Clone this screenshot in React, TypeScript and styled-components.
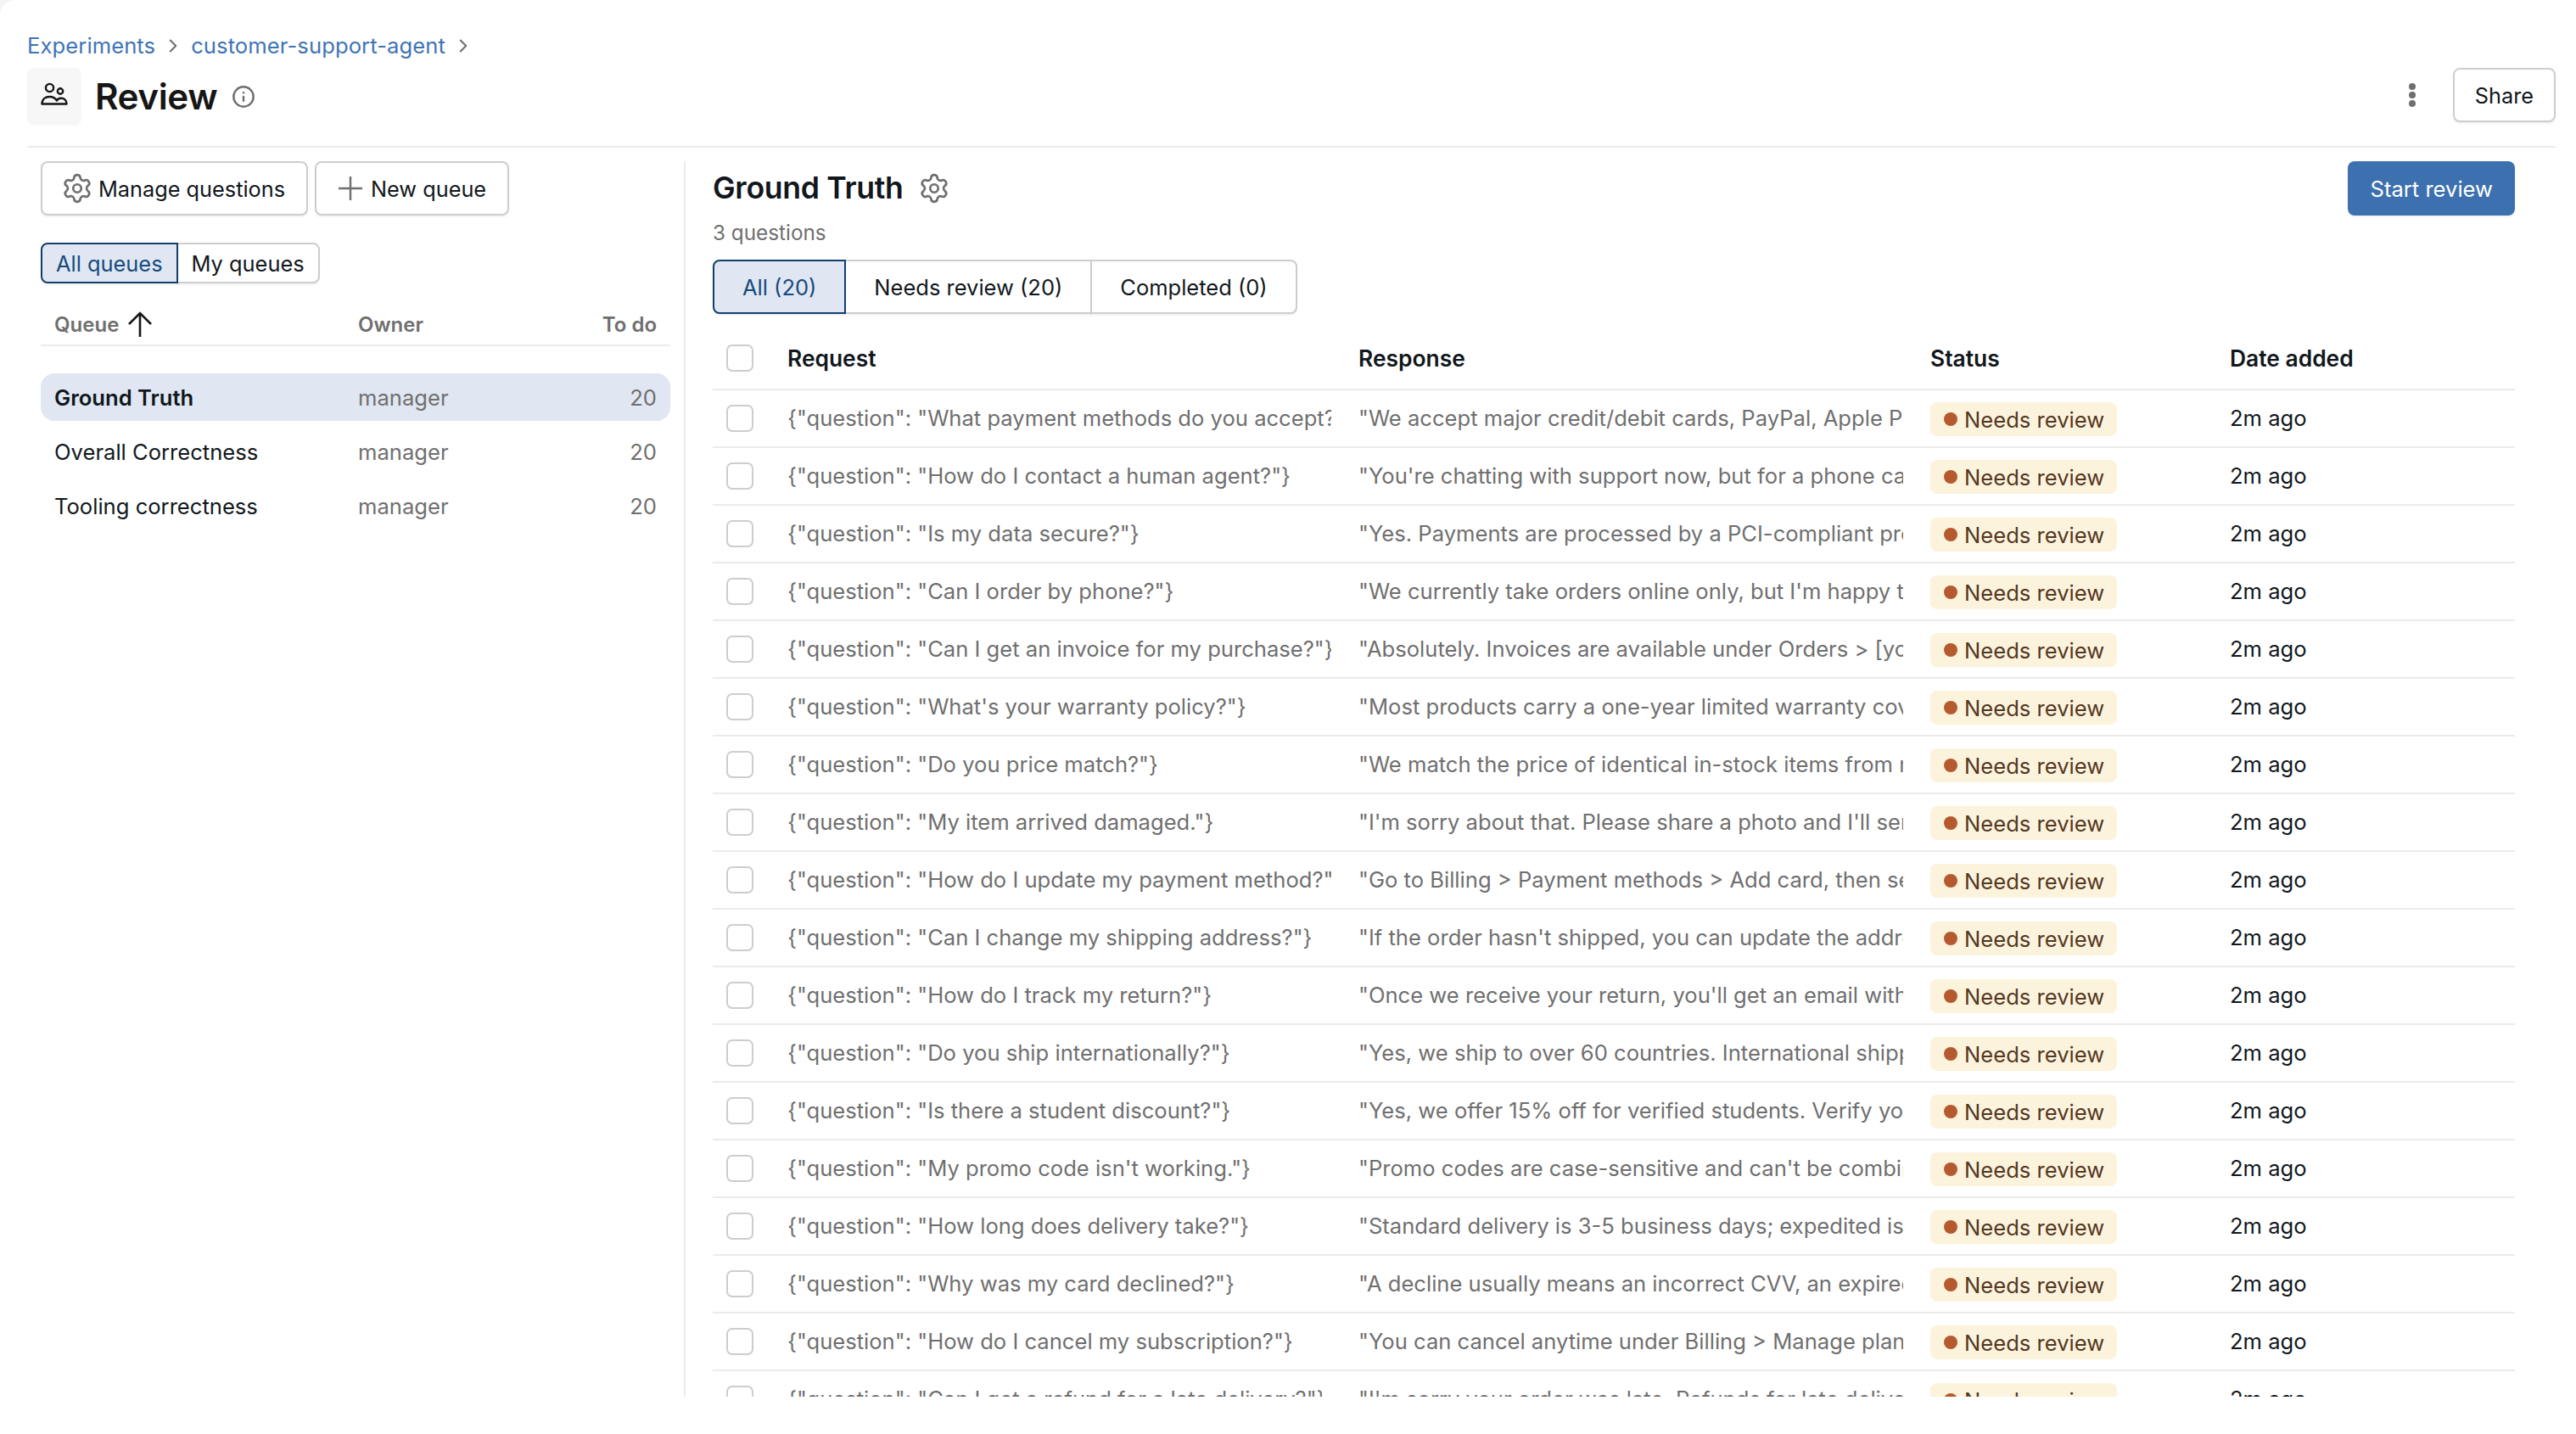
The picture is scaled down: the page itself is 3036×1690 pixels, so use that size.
import React from 'react';
import styled, { createGlobalStyle } from 'styled-components';
import { ChevronRight, Info, Settings } from 'lucide-react';

const GlobalStyle = createGlobalStyle`
  * {
    box-sizing: border-box;
  }
  html,
  body {
    margin: 0;
    background: #f4f5f7;
    font-family: Inter, 'Liberation Sans', sans-serif;
    font-size: 25.6px;
    color: #11171c;
  }
`;

const Shell = styled.div`
  height: 1690px;
  padding: 34px 24px 0 32px;
  background: #fff;
  border-top-left-radius: 18px;
  overflow: hidden;
`;

const Breadcrumb = styled.nav`
  display: flex;
  align-items: center;
  gap: 8px;
  height: 40px;
  color: #6f6f6f;
`;

const Crumb = styled.a`
  color: #3f74b5;
  line-height: 40px;
  letter-spacing: 0.08px;
`;

const TitleRow = styled.header`
  display: flex;
  align-items: flex-start;
  justify-content: space-between;
  margin-top: 6px;
  padding-bottom: 24px;
  border-bottom: 2px solid #ebebeb;
`;

const TitleLeft = styled.div`
  display: flex;
  align-items: center;
  height: 68px;
`;

const IconTile = styled.div`
  display: flex;
  align-items: center;
  justify-content: center;
  width: 64px;
  height: 68px;
  margin-right: 16px;
  border-radius: 8px;
  background: #f7f7f7;
  padding-bottom: 4px;
`;

const PageTitle = styled.h1`
  margin: 0 17px 0 0;
  font-size: 42.2px;
  font-weight: 600;
  line-height: 68px;
  letter-spacing: -0.4px;
  color: #161616;
`;

const InfoIcon = styled(Info)`
  color: #6f6f6f;
  margin-top: -1px;
`;

const TitleActions = styled.div`
  display: flex;
  align-items: center;
  gap: 40px;
`;

const Button = styled.button<{ $primary?: boolean }>`
  display: inline-flex;
  align-items: center;
  justify-content: center;
  gap: 9px;
  height: 64px;
  padding: 0 ${(p) => (p.$primary ? '26px' : '24px')};
  border: ${(p) => (p.$primary ? 'none' : '2px solid #cdcdcd')};
  border-radius: 8px;
  background: ${(p) => (p.$primary ? '#3c70ae' : '#fff')};
  color: ${(p) => (p.$primary ? '#fff' : '#11171c')};
  box-shadow: 0 2px 2px rgba(0, 0, 0, 0.05);
  font-family: inherit;
  font-size: ${(p) => (p.$primary ? '25.6px' : '25.3px')};
  white-space: nowrap;
`;

const ToolbarButton = styled(Button)`
  padding: 0 25px;
`;

const Body = styled.main`
  display: flex;
  height: 1456px;
  margin-top: 16px;
  overflow: hidden;
`;

const QueuePanel = styled.aside`
  flex: 0 0 776px;
  padding: 0 16px;
  border-right: 2px solid #ebebeb;
`;

const ButtonRow = styled.div`
  display: flex;
  gap: 8px;
`;

const Segments = styled.div`
  display: inline-flex;
  margin-top: 32px;
  vertical-align: top;
`;

const Segment = styled.button<{ $active?: boolean; $first?: boolean; $last?: boolean }>`
  height: 48px;
  padding: 0 16px;
  margin-left: ${(p) => (p.$first ? 0 : '-2px')};
  border: 2px solid ${(p) => (p.$active ? '#123f6e' : '#cdcdcd')};
  border-radius: ${(p) => (p.$first ? '8px 0 0 8px' : p.$last ? '0 8px 8px 0' : 0)};
  background: ${(p) => (p.$active ? '#e0e7f2' : '#fff')};
  color: ${(p) => (p.$active ? '#164a7e' : '#11171c')};
  box-shadow: 0 2px 2px rgba(0, 0, 0, 0.05);
  font-family: inherit;
  font-size: 25.4px;
  position: relative;
  z-index: ${(p) => (p.$active ? 1 : 0)};
`;

const QueueGrid = styled.div`
  display: grid;
  grid-template-columns: 358px 1fr auto;
  align-items: center;
  padding: 0 16px;
`;

const QueueHead = styled(QueueGrid)`
  height: 50px;
  margin-top: 24px;
  border-bottom: 2px solid #ebebeb;
  color: #6f6f6f;
  font-weight: 600;
  font-size: 24px;
`;

const SortLabel = styled.span`
  display: inline-flex;
  align-items: center;
  gap: 10px;
`;

const QueueList = styled.div`
  display: flex;
  flex-direction: column;
  gap: 8px;
  margin-top: 32px;
`;

const QueueRow = styled(QueueGrid)<{ $selected?: boolean }>`
  height: 56px;
  border-radius: 16px;
  background: ${(p) => (p.$selected ? '#e0e7f2' : 'transparent')};
  font-weight: ${(p) => (p.$selected ? 600 : 400)};
`;

const Muted = styled.span`
  color: #6f6f6f;
  font-weight: 400;
`;

const ReviewPanel = styled.section`
  flex: 1;
  min-width: 0;
  padding: 0 48px 0 32px;
`;

const ReviewHead = styled.div`
  display: flex;
  align-items: flex-start;
  justify-content: space-between;
`;

const QueueTitle = styled.h2`
  display: flex;
  align-items: center;
  gap: 20px;
  margin: 0;
  font-size: 35.6px;
  font-weight: 600;
  line-height: 64px;
  letter-spacing: -0.3px;
`;

const GearIcon = styled(Settings)`
  color: #6f6f6f;
  margin: -3px;
  flex: none;
`;

const QuestionCount = styled.div`
  line-height: 40px;
  font-size: 24.3px;
  color: #6f6f6f;
`;

const Tabs = styled.div`
  display: flex;
  margin-top: 12px;
`;

const Tab = styled(Segment)`
  height: 64px;
  padding: 0 33px;
  font-size: 25.5px;
`;

const ROW_COLUMNS = '72px 673px 674px 353px 352px';

const TableRow = styled.div<{ $head?: boolean }>`
  display: grid;
  grid-template-columns: ${ROW_COLUMNS};
  align-items: center;
  height: ${(p) => (p.$head ? '74px' : '68px')};
  margin-top: ${(p) => (p.$head ? '16px' : 0)};
  border-bottom: 2px solid #ebebeb;
  font-weight: ${(p) => (p.$head ? 600 : 400)};
  font-size: ${(p) => (p.$head ? '26.4px' : 'inherit')};
`;

const CheckCell = styled.div`
  padding-left: 16px;
`;

const Checkbox = styled.span`
  display: block;
  width: 32px;
  height: 32px;
  border: 2px solid #cdcdcd;
  border-radius: 7px;
  background: #fff;
`;

const Cell = styled.div<{ $muted?: boolean }>`
  margin: 0 16px 1px;
  overflow: hidden;
  white-space: nowrap;
  color: ${(p) => (p.$muted ? '#6f6f6f' : 'inherit')};
`;

const Badge = styled.span`
  display: inline-flex;
  align-items: center;
  gap: 8px;
  height: 40px;
  padding: 2px 15px 0 16px;
  border-radius: 8px;
  background: #fcf3dd;
  color: #54371f;
  margin-top: 2px;
`;

const BadgeDot = styled.i`
  width: 16px;
  height: 16px;
  margin-top: -2px;
  border-radius: 50%;
  background: #b45a2e;
`;

const PeopleIcon = () => (
  <svg width="32" height="32" viewBox="0 0 32 32" fill="none" stroke="#161616" strokeWidth="2.4" strokeLinejoin="round">
    <circle cx="10.5" cy="7.5" r="4.6" />
    <circle cx="23" cy="11.5" r="3.2" />
    <path d="M1.5 26.5C1.5 21 5.5 18 10.5 18C14 18 17 19.5 19 22.5C20 20.8 22 19.8 24 19.8C27.8 19.8 30.5 22.5 30.5 26.5Z" />
  </svg>
);

const KebabIcon = () => (
  <svg width="16" height="32" viewBox="0 0 16 32" fill="#6f6f6f">
    <circle cx="8" cy="6" r="4" />
    <circle cx="8" cy="16" r="4" />
    <circle cx="8" cy="26" r="4" />
  </svg>
);

const SortUpIcon = () => (
  <svg width="30" height="32" viewBox="0 0 30 32" fill="none" stroke="#161616" strokeWidth="2.6">
    <path d="M15 3V31M2 16L15 3L28 16" />
  </svg>
);

const PlusIcon = () => (
  <svg width="30" height="30" viewBox="0 0 30 30" fill="none" stroke="#6f6f6f" strokeWidth="2.4">
    <path d="M15 1V29M1 15H29" />
  </svg>
);

const queues = [
  { name: 'Ground Truth', selected: true },
  { name: 'Overall Correctness' },
  { name: 'Tooling correctness' },
];

const rows = [
  ['What payment methods do you accept?', 'We accept major credit/debit cards, PayPal, Apple Pay and more.'],
  ['How do I contact a human agent?', "You're chatting with support now, but for a phone call please use the number."],
  ['Is my data secure?', 'Yes. Payments are processed by a PCI-compliant provider and data is encrypted.'],
  ['Can I order by phone?', "We currently take orders online only, but I'm happy to help you check out."],
  ['Can I get an invoice for my purchase?', 'Absolutely. Invoices are available under Orders > [your order] > Invoice.'],
  ["What's your warranty policy?", 'Most products carry a one-year limited warranty covering defects.'],
  ['Do you price match?', 'We match the price of identical in-stock items from major retailers.'],
  ['My item arrived damaged.', "I'm sorry about that. Please share a photo and I'll send a replacement."],
  ['How do I update my payment method?', 'Go to Billing > Payment methods > Add card, then set it as default.'],
  ['Can I change my shipping address?', "If the order hasn't shipped, you can update the address under Orders."],
  ['How do I track my return?', "Once we receive your return, you'll get an email with the refund status."],
  ['Do you ship internationally?', 'Yes, we ship to over 60 countries. International shipping rates apply.'],
  ['Is there a student discount?', 'Yes, we offer 15% off for verified students. Verify your status at checkout.'],
  ["My promo code isn't working.", "Promo codes are case-sensitive and can't be combined with other offers."],
  ['How long does delivery take?', 'Standard delivery is 3-5 business days; expedited is 1-2 days.'],
  ['Why was my card declined?', 'A decline usually means an incorrect CVV, an expired card or a bank hold.'],
  ['How do I cancel my subscription?', 'You can cancel anytime under Billing > Manage plan > Cancel subscription.'],
  ['Can I get a refund for a late delivery?', "I'm sorry your order was late. Refunds for late delivery are available."],
];

const App = () => {
  return (
    <>
      <GlobalStyle />
      <Shell>
        <Breadcrumb>
          <Crumb>Experiments</Crumb>
          <ChevronRight size={26} strokeWidth={1.9} />
          <Crumb>customer-support-agent</Crumb>
          <ChevronRight size={26} strokeWidth={1.9} />
        </Breadcrumb>

        <TitleRow>
          <TitleLeft>
            <IconTile>
              <PeopleIcon />
            </IconTile>
            <PageTitle>Review</PageTitle>
            <InfoIcon size={28} strokeWidth={2.1} />
          </TitleLeft>
          <TitleActions>
            <KebabIcon />
            <Button>Share</Button>
          </TitleActions>
        </TitleRow>

        <Body>
          <QueuePanel>
            <ButtonRow>
              <ToolbarButton>
                <GearIcon size={38} strokeWidth={1.7} />
                Manage questions
              </ToolbarButton>
              <ToolbarButton>
                <PlusIcon />
                New queue
              </ToolbarButton>
            </ButtonRow>

            <Segments>
              <Segment $active $first>All queues</Segment>
              <Segment $last>My queues</Segment>
            </Segments>

            <QueueHead>
              <SortLabel>
                Queue
                <SortUpIcon />
              </SortLabel>
              <span>Owner</span>
              <span>To do</span>
            </QueueHead>

            <QueueList>
              {queues.map((queue) => (
                <QueueRow key={queue.name} $selected={queue.selected}>
                  <span>{queue.name}</span>
                  <Muted>manager</Muted>
                  <Muted>20</Muted>
                </QueueRow>
              ))}
            </QueueList>
          </QueuePanel>

          <ReviewPanel>
            <ReviewHead>
              <QueueTitle>
                Ground Truth
                <GearIcon size={38} strokeWidth={1.7} />
              </QueueTitle>
              <Button $primary>Start review</Button>
            </ReviewHead>
            <QuestionCount>3 questions</QuestionCount>

            <Tabs>
              <Tab $active $first>All (20)</Tab>
              <Tab>Needs review (20)</Tab>
              <Tab $last>Completed (0)</Tab>
            </Tabs>

            <TableRow $head>
              <CheckCell><Checkbox /></CheckCell>
              <Cell>Request</Cell>
              <Cell>Response</Cell>
              <Cell>Status</Cell>
              <Cell>Date added</Cell>
            </TableRow>

            {rows.map(([question, answer]) => (
              <TableRow key={question}>
                <CheckCell><Checkbox /></CheckCell>
                <Cell $muted>{`{"question": "${question}"}`}</Cell>
                <Cell $muted>{`"${answer}"`}</Cell>
                <Cell>
                  <Badge>
                    <BadgeDot />
                    Needs review
                  </Badge>
                </Cell>
                <Cell>2m ago</Cell>
              </TableRow>
            ))}
          </ReviewPanel>
        </Body>
      </Shell>
    </>
  );
};

export default App;
